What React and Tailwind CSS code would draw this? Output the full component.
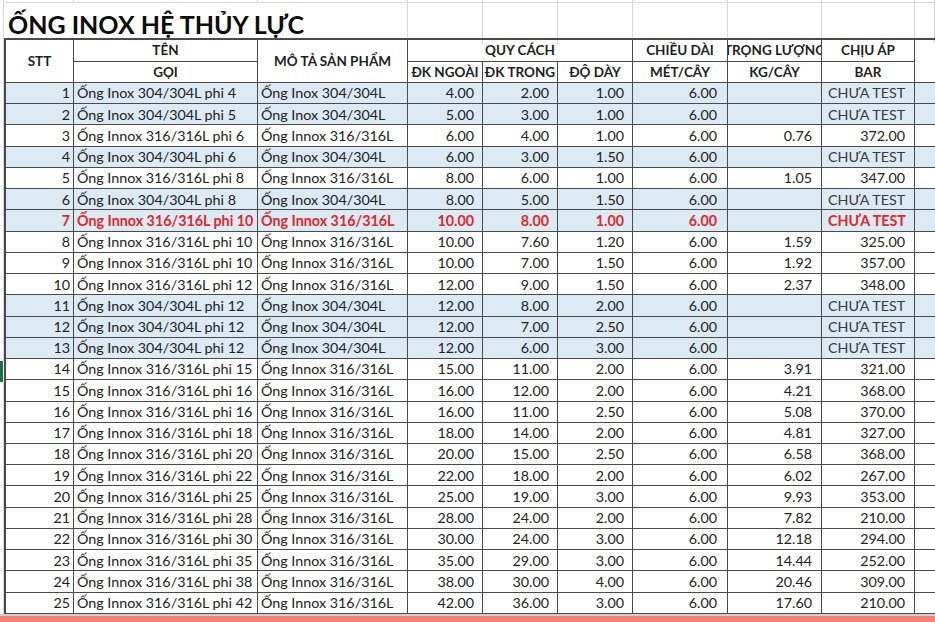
const cols = "grid grid-cols-[68px_184px_150px_75px_75px_75px_95px_94px_93px_1fr]";

const rows = [
  [1, "Ống Inox 304/304L phi 4", "Ống Inox 304/304L", "4.00", "2.00", "1.00", "6.00", "", "CHƯA TEST", "blue"],
  [2, "Ống Inox 304/304L phi 5", "Ống Inox 304/304L", "5.00", "3.00", "1.00", "6.00", "", "CHƯA TEST", "blue"],
  [3, "Ống Innox 316/316L phi 6", "Ống Innox 316/316L", "6.00", "4.00", "1.00", "6.00", "0.76", "372.00"],
  [4, "Ống Inox 304/304L phi 6", "Ống Inox 304/304L", "6.00", "3.00", "1.50", "6.00", "", "CHƯA TEST", "blue"],
  [5, "Ống Innox 316/316L phi 8", "Ống Innox 316/316L", "8.00", "6.00", "1.00", "6.00", "1.05", "347.00"],
  [6, "Ống Inox 304/304L phi 8", "Ống Inox 304/304L", "8.00", "5.00", "1.50", "6.00", "", "CHƯA TEST", "blue"],
  [7, "Ống Innox 316/316L phi 10", "Ống Innox 316/316L", "10.00", "8.00", "1.00", "6.00", "", "CHƯA TEST", "red"],
  [8, "Ống Innox 316/316L phi 10", "Ống Innox 316/316L", "10.00", "7.60", "1.20", "6.00", "1.59", "325.00"],
  [9, "Ống Innox 316/316L phi 10", "Ống Innox 316/316L", "10.00", "7.00", "1.50", "6.00", "1.92", "357.00"],
  [10, "Ống Innox 316/316L phi 12", "Ống Innox 316/316L", "12.00", "9.00", "1.50", "6.00", "2.37", "348.00"],
  [11, "Ống Inox 304/304L phi 12", "Ống Inox 304/304L", "12.00", "8.00", "2.00", "6.00", "", "CHƯA TEST", "blue"],
  [12, "Ống Inox 304/304L phi 12", "Ống Inox 304/304L", "12.00", "7.00", "2.50", "6.00", "", "CHƯA TEST", "blue"],
  [13, "Ống Inox 304/304L phi 12", "Ống Inox 304/304L", "12.00", "6.00", "3.00", "6.00", "", "CHƯA TEST", "blue"],
  [14, "Ống Innox 316/316L phi 15", "Ống Innox 316/316L", "15.00", "11.00", "2.00", "6.00", "3.91", "321.00"],
  [15, "Ống Innox 316/316L phi 16", "Ống Innox 316/316L", "16.00", "12.00", "2.00", "6.00", "4.21", "368.00"],
  [16, "Ống Innox 316/316L phi 16", "Ống Innox 316/316L", "16.00", "11.00", "2.50", "6.00", "5.08", "370.00"],
  [17, "Ống Innox 316/316L phi 18", "Ống Innox 316/316L", "18.00", "14.00", "2.00", "6.00", "4.81", "327.00"],
  [18, "Ống Innox 316/316L phi 20", "Ống Innox 316/316L", "20.00", "15.00", "2.50", "6.00", "6.58", "368.00"],
  [19, "Ống Innox 316/316L phi 22", "Ống Innox 316/316L", "22.00", "18.00", "2.00", "6.00", "6.02", "267.00"],
  [20, "Ống Innox 316/316L phi 25", "Ống Innox 316/316L", "25.00", "19.00", "3.00", "6.00", "9.93", "353.00"],
  [21, "Ống Innox 316/316L phi 28", "Ống Innox 316/316L", "28.00", "24.00", "2.00", "6.00", "7.82", "210.00"],
  [22, "Ống Innox 316/316L phi 30", "Ống Innox 316/316L", "30.00", "24.00", "3.00", "6.00", "12.18", "294.00"],
  [23, "Ống Innox 316/316L phi 35", "Ống Innox 316/316L", "35.00", "29.00", "3.00", "6.00", "14.44", "252.00"],
  [24, "Ống Innox 316/316L phi 38", "Ống Innox 316/316L", "38.00", "30.00", "4.00", "6.00", "20.46", "309.00"],
  [25, "Ống Innox 316/316L phi 42", "Ống Innox 316/316L", "42.00", "36.00", "3.00", "6.00", "17.60", "210.00"],
];

const cell = "border-r border-b border-[#4a4a4a] flex items-center overflow-hidden whitespace-nowrap";
const head = "border-r border-b border-[#4a4a4a] flex items-center justify-center overflow-hidden whitespace-nowrap font-bold text-[13.5px] text-[#1e1e1e]";

function Row({ r }) {
  const [stt, ten, mota, dkn, dkt, day, dai, kg, ap, kind] = r;
  const bg = kind ? "bg-[#dbeaf3]" : "bg-white";
  const txt = kind === "red" ? "font-bold text-[#e3262b]" : "text-[#222]";
  const test = ap === "CHƯA TEST";
  return (
    <div className={`${cols} h-[21.24px] ${bg} ${txt}`}>
      <div className={`${cell} justify-end pr-[3px]`}>{stt}</div>
      <div className={`${cell} pl-[3px]`}>{ten}</div>
      <div className={`${cell} pl-[3px]`}>{mota}</div>
      <div className={`${cell} justify-end pr-[8px]`}>{dkn}</div>
      <div className={`${cell} justify-end pr-[8px]`}>{dkt}</div>
      <div className={`${cell} justify-end pr-[8px]`}>{day}</div>
      <div className={`${cell} justify-end pr-[10px]`}>{dai}</div>
      <div className={`${cell} justify-end pr-[9px]`}>{kg}</div>
      <div className={`${cell} ${test ? "pl-[6px]" : "justify-end pr-[9px]"} ${test && kind !== "red" ? "text-[#3a3a3a]" : ""}`}>{ap}</div>
      <div className="border-b border-[#4a4a4a]"></div>
    </div>
  );
}

export default function App() {
  const light = "border-r border-[#d6d6d6]";
  return (
    <div className="w-[935px] h-[622px] overflow-hidden bg-white flex font-['Lato',sans-serif] text-[14.3px]">
      <div className="w-[4px] shrink-0 flex flex-col">
        <div className="h-[361px] border-r border-[#d6d6d6]"></div>
        <div className="h-[21px] w-[3px] bg-[#1e7145]"></div>
        <div className="flex-1 border-r border-[#d6d6d6]"></div>
      </div>
      <div className="flex-1 flex flex-col">
        <div className={`${cols} h-[3px] border-b border-[#d6d6d6] ml-[2px]`}>
          {Array.from({ length: 10 }).map((_, i) => (
            <div key={i} className={light}></div>
          ))}
        </div>
        <div className="grid grid-cols-[402px_75px_75px_75px_95px_94px_93px_1fr] h-[35px] ml-[2px]">
          <div className={`${light} flex items-center pl-[2px] pt-[3px] font-bold text-[25px] text-[#0c0c0c] whitespace-nowrap`}>
            ỐNG INOX HỆ THỦY LỰC
          </div>
          {Array.from({ length: 7 }).map((_, i) => (
            <div key={i} className={light}></div>
          ))}
        </div>
        <div className="border-t-2 border-l-2 border-[#4a4a4a]">
          <div className={`${cols} grid-rows-[22px_21px]`}>
            <div className={`${head} row-span-2`}>STT</div>
            <div className={head}>TÊN</div>
            <div className={`${head} row-span-2`}>MÔ TẢ SẢN PHẨM</div>
            <div className={`${head} col-span-3`}>QUY CÁCH</div>
            <div className={head}>CHIỀU DÀI</div>
            <div className={head}>TRỌNG LƯỢNG</div>
            <div className={head}>CHỊU ÁP</div>
            <div className="row-span-2 border-b border-[#4a4a4a]"></div>
            <div className={head}>GỌI</div>
            <div className={head}>ĐK NGOÀI</div>
            <div className={head}>ĐK TRONG</div>
            <div className={head}>ĐỘ DÀY</div>
            <div className={head}>MÉT/CÂY</div>
            <div className={head}>KG/CÂY</div>
            <div className={head}>BAR</div>
          </div>
          {rows.map((r) => (
            <Row key={r[0]} r={r} />
          ))}
        </div>
        <div className="h-[2px] bg-[#cfcfcf] -ml-[4px]"></div>
        <div className="flex-1 bg-[#f1837a] -ml-[4px]"></div>
      </div>
    </div>
  );
}
